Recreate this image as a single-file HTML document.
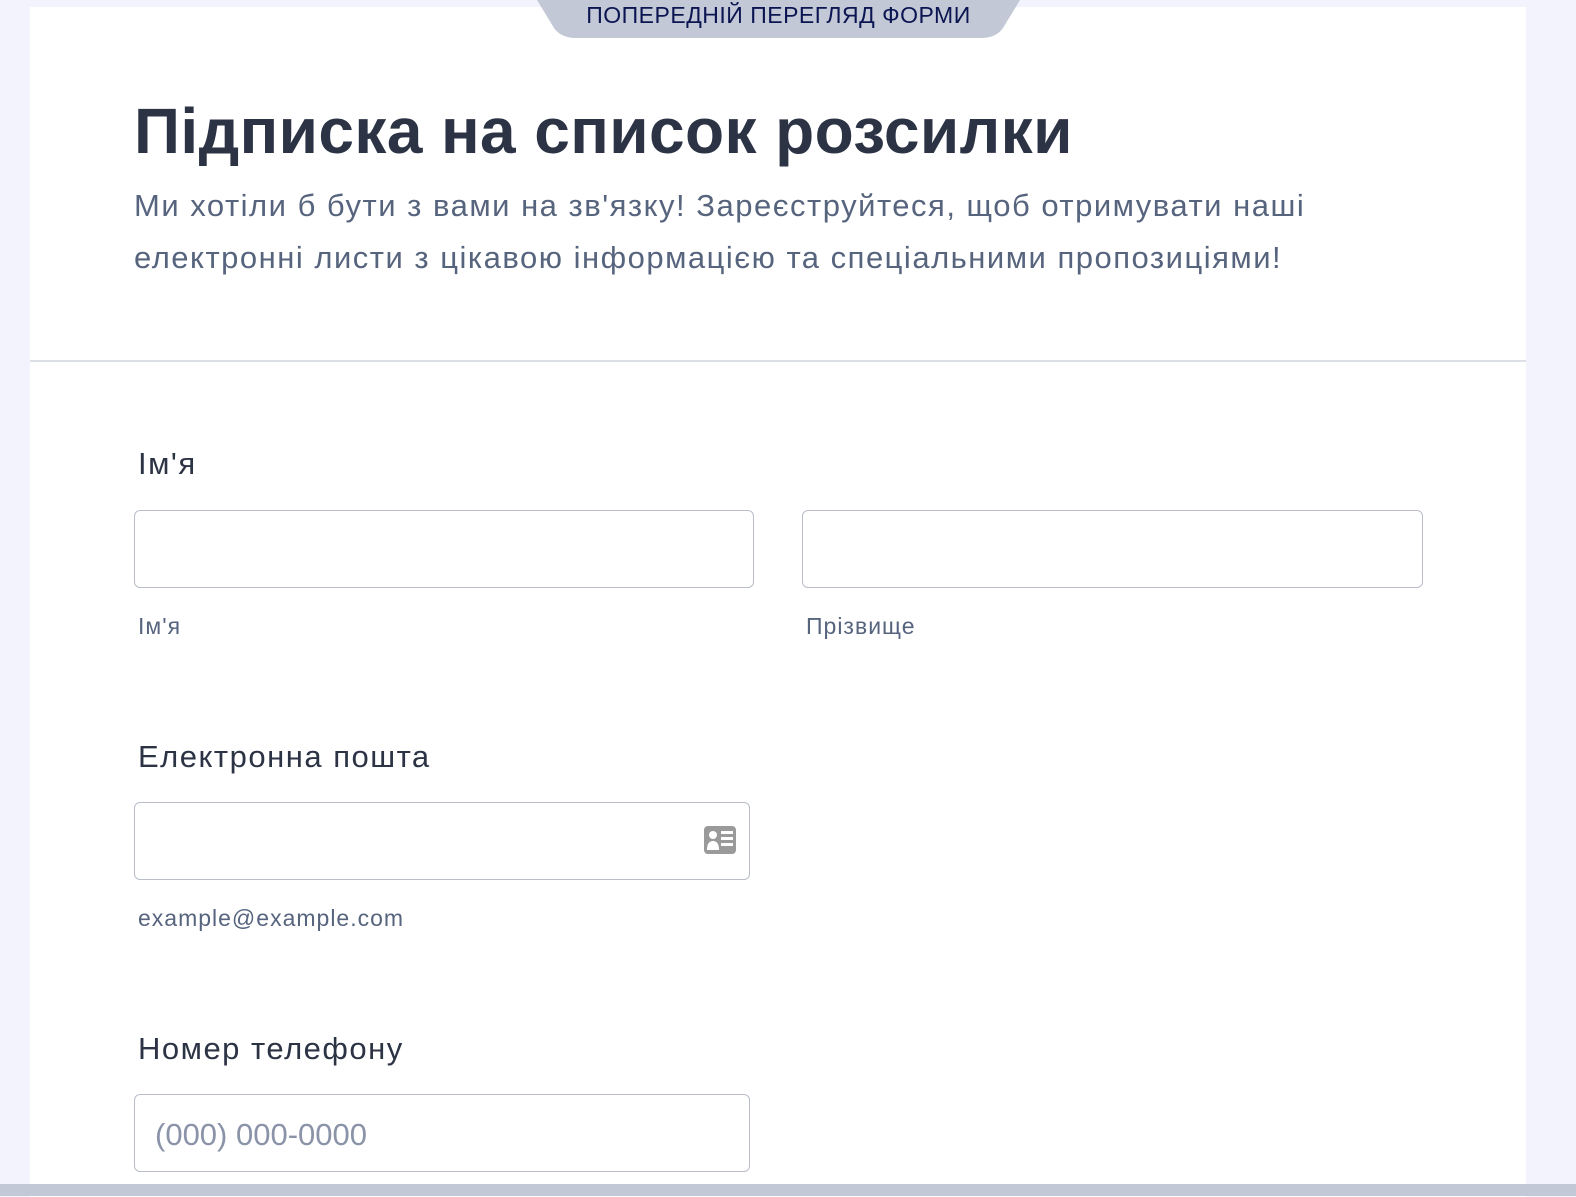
<!DOCTYPE html>
<html><head><meta charset="utf-8"><style>
body{margin:0;width:1576px;height:1196px;background:#f3f3fe;font-family:"Liberation Sans",sans-serif;position:relative;overflow:hidden}
.card{position:absolute;left:30px;top:7px;width:1496px;height:1190px;background:#fff}
.tab{position:absolute;left:537px;top:0;width:483px;height:39px}
.tabt{position:absolute;left:537px;top:2px;width:483px;text-align:center;font-size:23px;letter-spacing:0.5px;color:#0a1551;line-height:26px}
h1{position:absolute;left:134px;top:94px;margin:0;font-size:64px;font-weight:bold;color:#2c3345;letter-spacing:0.4px;white-space:nowrap}
.desc{position:absolute;left:134px;top:180px;font-size:31px;letter-spacing:1.5px;line-height:52px;color:#57647e;white-space:nowrap}
.hr{position:absolute;left:30px;top:360px;width:1496px;height:2px;background:#dcdfe6}
.lab{position:absolute;left:138px;font-size:31px;letter-spacing:1.5px;color:#2c3345}
.sub{position:absolute;font-size:23px;letter-spacing:1px;color:#57647e}
.inp{position:absolute;height:75px;border:1.5px solid #b8bdc9;border-radius:6px;box-sizing:border-box;background:#fff}
.bar{position:absolute;left:0;top:1184px;width:1576px;height:12px;background:#c3c8d6}
</style></head><body>
<div class="card"></div>
<svg class="tab" viewBox="0 0 483 39"><path d="M0 0 L483 0 L466 28 Q459 38 444 38 L39 38 Q24 38 17 28 Z" fill="#c3c8d6"/></svg>
<div class="tabt">ПОПЕРЕДНІЙ ПЕРЕГЛЯД ФОРМИ</div>
<h1>Підписка на список розсилки</h1>
<div class="desc">Ми хотіли б бути з вами на зв'язку! Зареєструйтеся, щоб отримувати наші<br>електронні листи з цікавою інформацією та спеціальними пропозиціями!</div>
<div class="hr"></div>
<div class="lab" style="top:446px">Ім'я</div>
<div class="inp" style="left:134px;top:510px;width:620px;height:78px"></div>
<div class="inp" style="left:802px;top:510px;width:621px;height:78px"></div>
<div class="sub" style="left:138px;top:613px">Ім'я</div>
<div class="sub" style="left:806px;top:613px">Прізвище</div>
<div class="lab" style="top:739px">Електронна пошта</div>
<div class="inp" style="left:134px;top:802px;width:616px;height:78px"></div>
<svg style="position:absolute;left:704px;top:826px" width="32" height="28" viewBox="0 0 32 28"><rect width="32" height="28" rx="4" fill="#9a9a9a"/><circle cx="9" cy="9" r="4" fill="#fff"/><path d="M3 24 Q3 15 9 15 Q15 15 15 24Z" fill="#fff"/><rect x="17" y="5" width="12" height="3" fill="#fff"/><rect x="17" y="11" width="12" height="3" fill="#fff"/><rect x="17" y="17" width="12" height="3" fill="#fff"/></svg>
<div class="sub" style="left:138px;top:905px">example@example.com</div>
<div class="lab" style="top:1031px">Номер телефону</div>
<div class="inp" style="left:134px;top:1094px;width:616px;height:78px"></div>
<div style="position:absolute;left:155px;top:1117px;font-size:31px;color:#8a93a8">(000) 000-0000</div>
<div class="bar"></div>
</body></html>
